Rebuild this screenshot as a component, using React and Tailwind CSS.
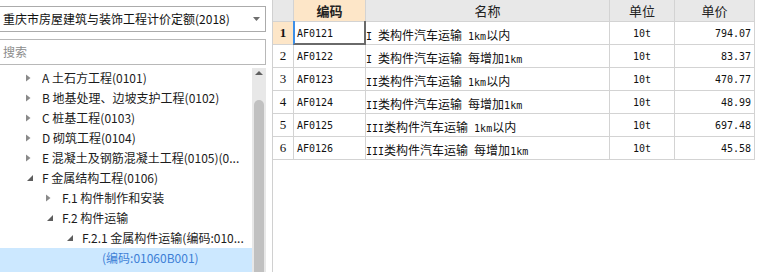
import React from "react";

const rows = [
  ["AF0121", "I 类构件汽车运输 1km以内", "10t", "794.07"],
  ["AF0122", "I 类构件汽车运输 每增加1km", "10t", "83.37"],
  ["AF0123", "II类构件汽车运输 1km以内", "10t", "470.77"],
  ["AF0124", "II类构件汽车运输 每增加1km", "10t", "48.99"],
  ["AF0125", "III类构件汽车运输 1km以内", "10t", "697.48"],
  ["AF0126", "III类构件汽车运输 每增加1km", "10t", "45.58"],
];

const tree = [
  { level: 0, state: "closed", text: "A 土石方工程(0101)" },
  { level: 0, state: "closed", text: "B 地基处理、边坡支护工程(0102)" },
  { level: 0, state: "closed", text: "C 桩基工程(0103)" },
  { level: 0, state: "closed", text: "D 砌筑工程(0104)" },
  { level: 0, state: "closed", text: "E 混凝土及钢筋混凝土工程(0105)(0..." },
  { level: 0, state: "open", text: "F 金属结构工程(0106)" },
  { level: 1, state: "closed", text: "F.1 构件制作和安装" },
  { level: 1, state: "open", text: "F.2 构件运输" },
  { level: 2, state: "open", text: "F.2.1 金属构件运输(编码:010..." },
  { level: 3, state: "leaf", text: "(编码:01060B001)", selected: true },
];

const padByLevel = ["pl-[26px]", "pl-[46px]", "pl-[66px]", "pl-[86px]"];

function Mixed({ text }) {
  const parts = text.split(/([\x00-\x7F]+)/).filter((p) => p.length);
  return (
    <>
      {parts.map((p, i) =>
        /^[\x00-\x7F]+$/.test(p) ? (
          <span key={i} className="font-['DejaVu_Sans_Mono',monospace] text-[10px] whitespace-pre">
            {p}
          </span>
        ) : (
          <span key={i} className="font-['Noto_Sans_CJK_SC',sans-serif] text-[12px]">
            {p}
          </span>
        )
      )}
    </>
  );
}

function Arrow({ state }) {
  if (state === "closed")
    return (
      <svg width="5" height="8" viewBox="0 0 5 8" className="block">
        <polygon points="0,0.5 4.5,4 0,7.5" fill="#8a8a8a" />
      </svg>
    );
  if (state === "open")
    return (
      <svg width="6" height="6" viewBox="0 0 6 6" className="block ml-[1px]">
        <polygon points="6,0 6,6 0,6" fill="#5e5e5e" />
      </svg>
    );
  return null;
}

function TreeRow({ item }) {
  return (
    <div
      className={`flex items-center whitespace-nowrap pr-[4px] ${padByLevel[item.level]} ${
        item.selected ? "h-[24px] bg-[#cce8ff] pb-[4px]" : "h-[20px]"
      }`}
    >
      <div className="w-[16px] shrink-0 flex items-center">
        <Arrow state={item.state} />
      </div>
      <div
        className={`overflow-hidden leading-[20px] text-[12px] ${
          item.selected ? "text-[#3d7fd6]" : "text-[#1b1b1b]"
        }`}
      >
        {item.text}
      </div>
    </div>
  );
}

export default function App() {
  return (
    <div className="w-[766px] h-[272px] flex bg-white overflow-hidden font-['Noto_Sans_CJK_SC',sans-serif]">
      {/* Left panel */}
      <div className="w-[272px] shrink-0 flex flex-col">
        <div className="mt-[6px] ml-[-1px] w-[267px] h-[26px] border border-[#ababab] flex items-center pl-[3px] pr-[5px]">
          <div className="flex-1 text-[12px] text-[#111] leading-none whitespace-nowrap">
            重庆市房屋建筑与装饰工程计价定额(2018)
          </div>
          <svg width="7" height="4" viewBox="0 0 7 4" className="block">
            <polygon points="0,0 7,0 3.5,4" fill="#6e6e6e" />
          </svg>
        </div>
        <div className="mt-[7px] ml-[-1px] w-[267px] h-[26px] border border-[#b8b8b8] flex items-center pl-[3px]">
          <span className="text-[12px] text-[#8c8c8c] leading-none">搜索</span>
        </div>
        <div className="mt-[3px] flex-1 min-h-0 flex">
          <div className="w-[252px] shrink-0 flex flex-col">
            {tree.map((t, i) => (
              <TreeRow key={i} item={t} />
            ))}
          </div>
          <div className="w-[14px] shrink-0 bg-[#e8e8e8] flex flex-col items-center">
            <svg width="8" height="4" viewBox="0 0 8 4" className="block mt-[3px]">
              <polygon points="0,4 8,4 4,0" fill="#606060" />
            </svg>
            <div className="mt-[25px] w-[10px] flex-1 bg-[#c1c1c1] rounded-t-[5px]" />
          </div>
        </div>
      </div>

      {/* Right panel */}
      <div className="flex-1 border-l border-[#d0d0d0] flex flex-col">
        {/* header */}
        <div className="flex h-[22px]">
          <div className="w-[21px] h-[22px] bg-[#e8e8e8] border-r border-b border-[#d3d3d3]" />
          <div className="w-[72px] h-[22px] bg-[#fde6c8] border-r border-b border-[#d3d3d3] flex items-center justify-center text-[13px] font-bold text-[#222]">
            编码
          </div>
          <div className="w-[244px] h-[22px] bg-[#e8e8e8] border-r border-b border-[#d3d3d3] flex items-center justify-center text-[13px] text-[#222]">
            名称
          </div>
          <div className="w-[65px] h-[22px] bg-[#e8e8e8] border-r border-b border-[#d3d3d3] flex items-center justify-center text-[13px] text-[#222]">
            单位
          </div>
          <div className="w-[80px] h-[22px] bg-[#e8e8e8] border-r border-b border-[#d3d3d3] flex items-center justify-center text-[13px] text-[#222]">
            单价
          </div>
        </div>
        {rows.map((r, i) => (
          <div key={i} className="flex h-[23px] text-[#111]">
            <div
              className={`w-[21px] h-[23px] border-r border-b border-[#d3d3d3] flex items-center justify-center font-['Liberation_Serif',serif] text-[13px] ${
                i === 0 ? "bg-[#fde6c8] font-bold" : "bg-white"
              }`}
            >
              {i + 1}
            </div>
            <div className="relative w-[72px] h-[23px] border-r border-b border-[#d3d3d3] flex items-center pl-[3px]">
              <span className="font-['DejaVu_Sans_Mono',monospace] text-[10px]">{r[0]}</span>
              {i === 0 && (
                <div className="absolute left-[-1px] top-[-1px] right-[-1px] bottom-[-1px] border-l-2 border-l-[#3d8fe8] border-r-2 border-r-[#6a6a6a] border-b-2 border-b-[#6a6a6a]" />
              )}
            </div>
            <div className="w-[244px] h-[23px] border-r border-b border-[#d3d3d3] flex items-center whitespace-nowrap overflow-hidden">
              <div className="leading-none">
                <Mixed text={r[1]} />
              </div>
            </div>
            <div className="w-[65px] h-[23px] border-r border-b border-[#d3d3d3] flex items-center justify-center">
              <span className="font-['DejaVu_Sans_Mono',monospace] text-[10px]">{r[2]}</span>
            </div>
            <div className="w-[80px] h-[23px] border-r border-b border-[#d3d3d3] flex items-center justify-end pr-[3px]">
              <span className="font-['DejaVu_Sans_Mono',monospace] text-[10px]">{r[3]}</span>
            </div>
          </div>
        ))}
      </div>
    </div>
  );
}
